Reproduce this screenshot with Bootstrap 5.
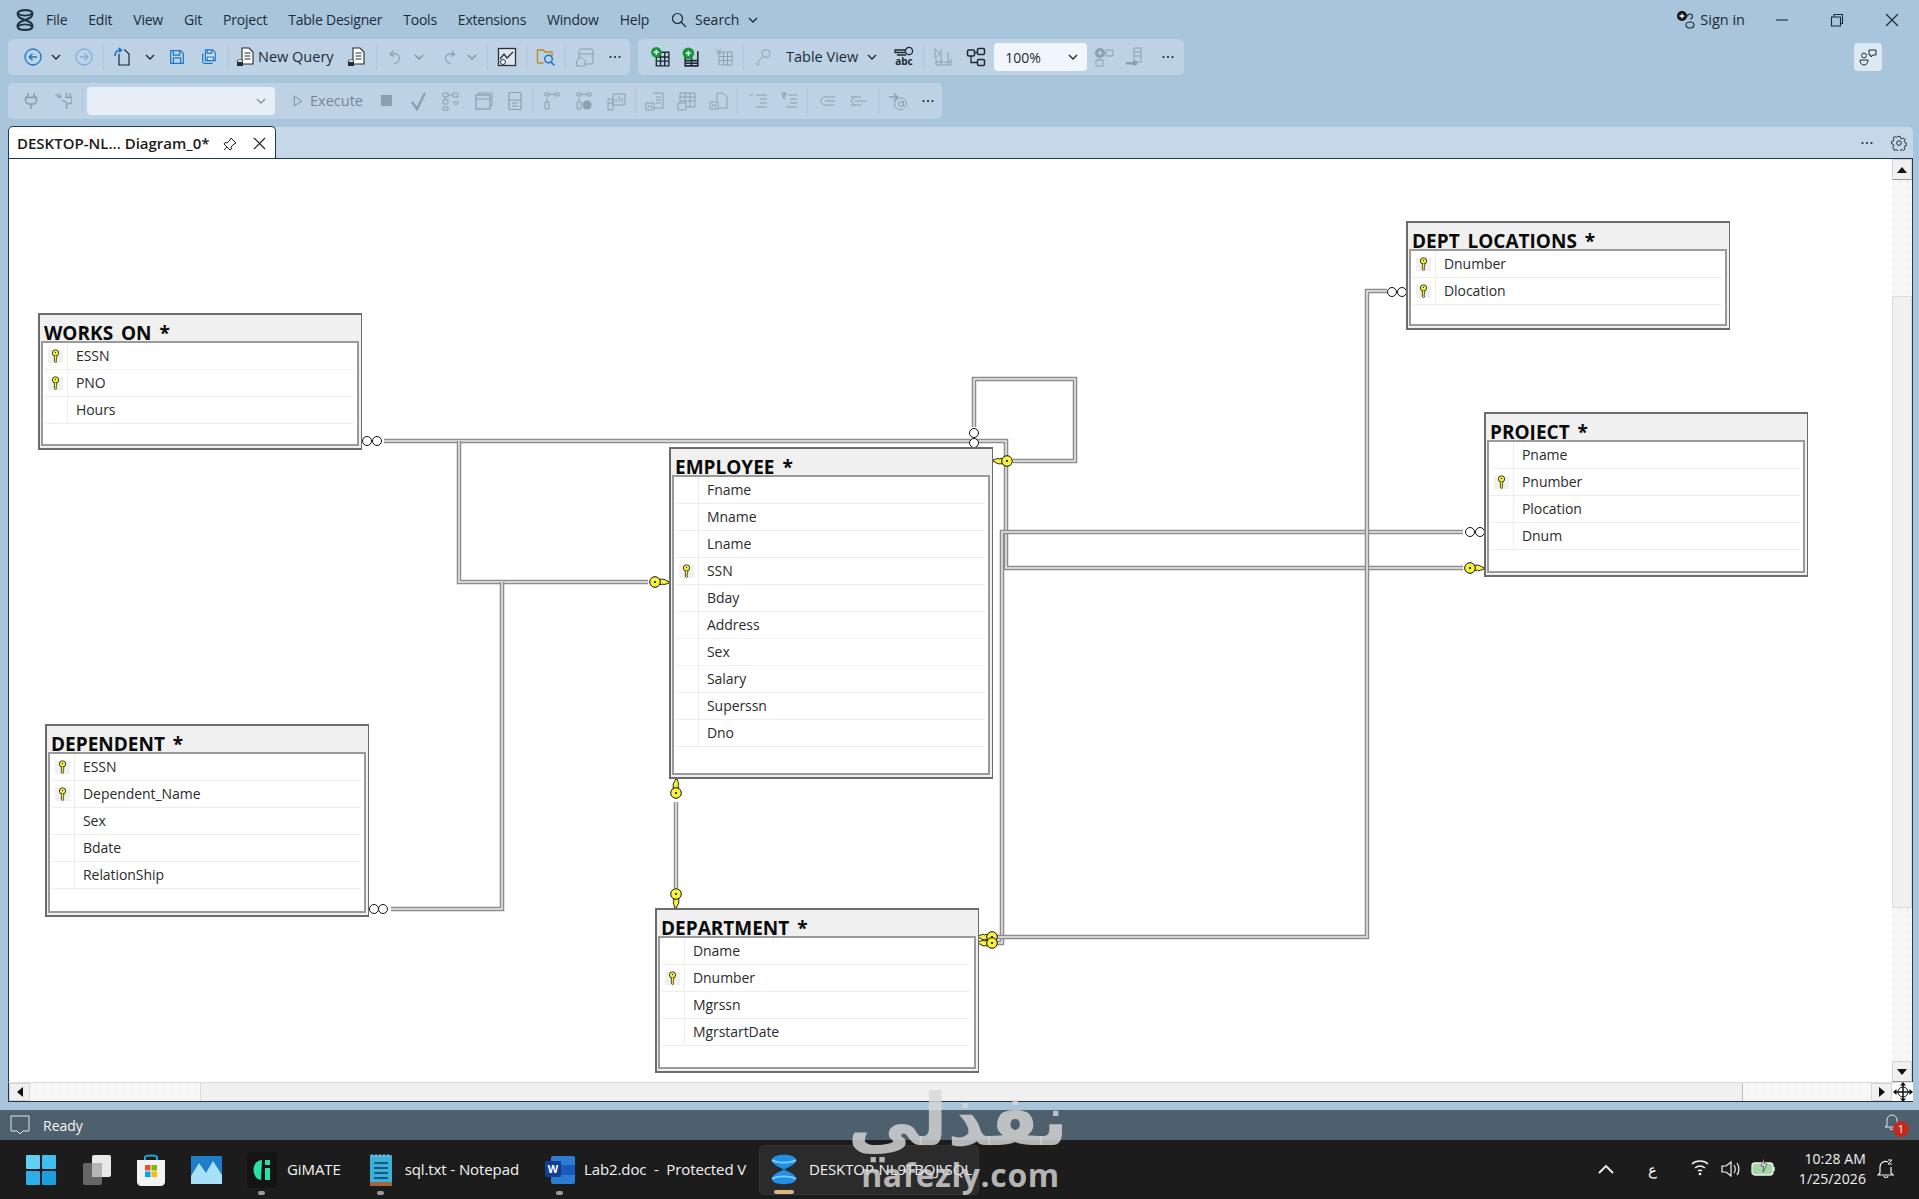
<!DOCTYPE html>
<html lang="en">
<head>
  <meta charset="UTF-8">
  <title>DESKTOP-NL9TBOJ\SQL - Diagram_0</title>
  <link href="https://cdn.jsdelivr.net/npm/bootstrap@5.3.0/dist/css/bootstrap.min.css" rel="stylesheet">
  <script src="https://cdn.jsdelivr.net/npm/bootstrap@5.3.0/dist/js/bootstrap.bundle.min.js"></script>
  <style>
    html, body { height: 1199px; overflow: hidden; }
    body { background: #a8c5db; font-family: "Open Sans", "Noto Sans", sans-serif; font-size: 14px; color: #1c2b36; width: 1919px; position: relative; }
    svg { display: block; flex: none; }
    .title-row { height: 39px; padding-left: 14px; }
    .app-logo { margin-right: 10px; }
    .menu-items { gap: 21px; font-size: 14px; letter-spacing: -.22px; }
    .search-box { margin-left: 22px; }
    .sign-text { font-size: 14.5px; margin-right: 9px; }
    .win-btn { width: 55px; }
    .tool-row { height: 36px; margin: 0 0 8px 8px; gap: 8px; }
    .tool-group { background: #bdd2e4; border-radius: 5px; height: 36px; }
    .tool-group.first { width: 622px; padding-left: 9px; }
    .tool-group.second { width: 546px; padding-left: 7px; }
    .tool-group.third { width: 934px; padding-left: 7px; }
    .tb { width: 32px; height: 36px; display: flex; align-items: center; justify-content: center; flex: none; }
    .tb.w28 { width: 28px; }
    .tb.w30 { width: 30px; }
    .tb.chev { width: 20px; }
    .tb.chev.w19 { width: 19px; }
    .tb.chev.w21 { width: 21px; }
    .tb.chev.w22 { width: 22px; }
    .tb.snug { justify-content: flex-start; padding-left: 1px; }
    .tb.off { opacity: .38; }
    .tb-sep { width: 1px; height: 26px; background: #aec5d8; margin: 0 3px; flex: none; }
    .tb-sep.tight { margin: 0 2px; }
    .tb-text { white-space: nowrap; font-size: 14.5px; }
    .tb-text.off { opacity: .45; }
    .gap-l1 { margin-left: 1px; }
    .gap-l2 { margin-left: 2px; }
    .gap-l3 { margin-left: 3px; }
    .gap-l4 { margin-left: 4px; }
    .gap-l6 { margin-left: 6px; }
    .gap-l7 { margin-left: 7px; }
    .gap-l8 { margin-left: 8px; }
    .gap-l18 { margin-left: 18px; }
    .combo-box { background: #e6eff7; border-radius: 4px; height: 28px; }
    .combo-conn { width: 188px; margin-left: 1px; justify-content: flex-end; padding-right: 8px; }
    .combo-zoom { width: 93px; margin: 0 2px; padding: 0 8px 0 11px; justify-content: space-between; background: #f0f6fb; }
    .chat-btn { position: absolute; left: 1854px; top: 43px; width: 28px; height: 28px; background: #dce9f3; border-radius: 4px; }
    .tab-strip { height: 32px; margin: 0 6px 0 8px; background: #c4d8ea; border-bottom: 1px solid #1c3a50; border-top-right-radius: 5px; padding-right: 6px; }
    .doc-tab { width: 268px; height: 32px; background: #fff; border: 1px solid #1c3a50; border-bottom: 0; border-radius: 5px 5px 0 0; padding: 2px 9px 0 8px; font-weight: 600; font-size: 15px; color: #1b1b1b; }
    .strip-tools { height: 31px; }
    .strip-btn { width: 49px; }
    .canvas-row { height: 923px; margin: 0 6px 0 8px; }
    .diagram-area { width: 1884px; height: 923px; background: #fff; position: relative; overflow: hidden; border-left: 1px solid #1c3a50; }
    .links { position: absolute; left: -1px; top: 0; }
    .er-table { position: absolute; width: 324px; background: #f0f0f0; border: 2px solid #6c6c6c; border-right-width: 1px; border-bottom-width: 2px; }
    .er-title { height: 26px; padding-left: 4px; font-weight: 700; font-size: 19px; line-height: 37px; color: #0a0a0a; white-space: nowrap; word-spacing: 3px; }
    .er-body { position: relative; background: #fff; border: 2px solid #9a9a9a; margin: 0 2px 0 1px; height: calc(100% - 28px); padding-left: 1px; padding-right: 3px; }
    .er-row { height: 27px; display: flex; border-bottom: 1px solid #eeeeee; color: #2b2b2b; font-size: 14px; line-height: 25px; letter-spacing: -.06px; }
    .er-sel { width: 24px; margin-right: 8px; border-right: 1px solid #eeeeee; display: flex; align-items: center; justify-content: center; flex: none; padding-right: 2px; }
    .key-cell { background: #f0f0f0; width: 15px; height: 13px; display: flex; align-items: center; justify-content: center; margin-left: 1px; }
    .sbar-btn { background: #f0f0f0; display: flex; align-items: center; justify-content: center; border: 1px solid #d6d6d6; flex: none; }
    .dither { background-color: #fff; background-image: linear-gradient(45deg, #efefef 25%, transparent 25%, transparent 75%, #efefef 75%), linear-gradient(45deg, #efefef 25%, transparent 25%, transparent 75%, #efefef 75%); background-size: 2px 2px; background-position: 0 0, 1px 1px; }
    .v-bar { width: 21px; height: 923px; border-right: 1px solid #1c3a50; }
    .v-bar .sbar-btn { height: 21px; border-bottom-color: #9a9a9a; }
    .v-track-top { height: 116px; }
    .v-thumb { height: 612px; background: #f0f0f0; border: 1px solid #dcdcdc; }
    .h-bar { height: 20px; margin: 0 6px 0 8px; border-left: 1px solid #1c3a50; border-bottom: 1px solid #24343f; border-top: 1px solid #dcdcdc; }
    .h-bar .sbar-btn { width: 21px; }
    .h-track-left { width: 170px; }
    .h-thumb { width: 1543px; background: #f0f0f0; border-left: 1px solid #dcdcdc; border-right: 1px solid #bdbdbd; }
    .corner-box { width: 21px; background: #fff; }
    .status-bar { height: 30px; margin-top: 8px; background: #4e606d; color: #f2f5f7; padding: 0 12px 0 10px; position: relative; }
    .status-icon { margin-right: 13px; }
    .bell-wrap { position: relative; width: 24px; height: 26px; }
    .bell-badge { position: absolute; left: 10px; top: 9px; width: 16px; height: 16px; border-radius: 50%; background: #c42b1c; color: #fff; font-size: 11px; line-height: 16px; text-align: center; }
    .task-bar { height: 59px; background: #1c1c1c; color: #f3f3f3; position: relative; padding-left: 26px; font-size: 15px; letter-spacing: -.1px; }
    .task-app { position: relative; display: flex; align-items: center; height: 50px; flex: none; }
    .task-dot { position: absolute; bottom: 0; width: 7px; height: 4px; border-radius: 2px; background: #9b9b9b; }
    .pin-tv { margin-left: 26px; }
    .pin-store { margin-left: 25px; }
    .pin-photos { margin-left: 26px; }
    .app-gimate { margin-left: 25px; gap: 10px; }
    .app-gimate .task-dot { left: 11px; }
    .app-notepad { margin-left: 28px; gap: 12px; }
    .app-notepad .task-dot { left: 8px; }
    .app-word { margin-left: 26px; gap: 9px; }
    .app-word .task-dot { left: 11px; }
    .app-word .task-label { width: 160px; white-space: pre; }
    .task-cur { background: #2b2b2b; border: 1px solid #333; border-radius: 5px; width: 220px; padding-left: 11px; gap: 12px; margin-left: 15px; }
    .task-cur .task-dot { left: 14px; width: 20px; background: #d9b77e; }
    .task-label { white-space: nowrap; }
    .tray { position: absolute; top: 0; bottom: 0; }
    .tray-up { left: 1598px; }
    .tray-lang { left: 1648px; }
    .tray-wifi { left: 1690px; }
    .tray-vol { left: 1721px; }
    .tray-batt { left: 1751px; }
    .tray-bell { left: 1877px; }
    .clock { position: absolute; right: 53px; top: 9px; text-align: right; line-height: 20px; font-size: 14px; letter-spacing: .1px; }
    .watermark { position: absolute; left: 856px; top: 1082px; width: 212px; text-align: center; color: rgba(215,215,215,.82); pointer-events: none; }
    .watermark-ar { font-family: "DejaVu Sans", sans-serif; font-weight: 700; font-size: 72px; line-height: 76px; white-space: nowrap; }
    .watermark-en { font-weight: 700; font-size: 32px; line-height: 38px; margin: -2px 0 0 -3px; letter-spacing: .6px; }
  </style>
</head>
<body>

<svg width="0" height="0" class="position-absolute">
  <defs>
    <symbol id="chev" viewBox="0 0 12 12"><path d="M2 4l4 4 4-4" fill="none" stroke="currentColor" stroke-width="1.3"/></symbol>
    <symbol id="dots" viewBox="0 0 20 20"><circle cx="5" cy="10" r="1.2" fill="#1c2b36"/><circle cx="10" cy="10" r="1.2" fill="#1c2b36"/><circle cx="15" cy="10" r="1.2" fill="#1c2b36"/></symbol>
    <symbol id="back" viewBox="0 0 20 20"><circle cx="10" cy="10" r="8" fill="none" stroke="#1e78c8" stroke-width="1.3"/><path d="M14 10H6.500M9.500 6.800L6.200 10l3.300 3.200" fill="none" stroke="#1e78c8" stroke-width="1.3"/></symbol>
    <symbol id="fwd" viewBox="0 0 20 20"><circle cx="10" cy="10" r="8" fill="none" stroke="#1e78c8" stroke-width="1.3"/><path d="M6 10h7.500M10.500 6.800l3.300 3.200-3.300 3.200" fill="none" stroke="#1e78c8" stroke-width="1.3"/></symbol>
    <symbol id="newproj" viewBox="0 0 20 20"><path d="M6 7v11h10V7l-4-4h-1" fill="none" stroke="#1f2a33" stroke-width="1.2"/><path d="M2 9c0-4 2-6 6-6M5.500 1L8.500 3 6 5.500" fill="none" stroke="#1e78c8" stroke-width="1.6"/></symbol>
    <symbol id="save" viewBox="0 0 20 20"><path d="M3 3h11l3 3v11H3zM6 3v5h7V3M6 17v-6h8v6" fill="none" stroke="#1e78c8" stroke-width="1.4"/></symbol>
    <symbol id="saveall" viewBox="0 0 20 20"><path d="M3 6v9c0 1 1 2 2 2h9" fill="none" stroke="#1e78c8" stroke-width="1.3"/><path d="M6 2h8l3 3v9H6zM8 2v4h5V2M8 14v-4h7v4" fill="#cfe0ee" stroke="#1e78c8" stroke-width="1.3"/></symbol>
    <symbol id="query" viewBox="0 0 20 20"><path d="M6 1h7l4 4v12H6z" fill="#fff" stroke="#1f2a33" stroke-width="1.1"/><path d="M8.500 6h6M8.500 9h6M8.500 12h6" stroke="#1f2a33" stroke-width="1"/><path d="M1 14h6v5H1z" fill="#1f2a33"/><ellipse cx="4" cy="14" rx="3" ry="1.300" fill="#fff" stroke="#1f2a33" stroke-width=".7"/></symbol>
    <symbol id="undo" viewBox="0 0 20 20"><path d="M7 3L3.500 7 8 9.500M4 7c6-2 11 1 9.500 6-.7 2.500-3 4-5.500 4" fill="none" stroke="#3c5060" stroke-width="1.3"/></symbol>
    <symbol id="redo" viewBox="0 0 20 20"><path d="M13 3l3.500 4L12 9.500M16 7c-6-2-11 1-9.500 6 .7 2.500 3 4 5.500 4" fill="none" stroke="#3c5060" stroke-width="1.3"/></symbol>
    <symbol id="monitor" viewBox="0 0 20 20"><rect x="1.500" y="1.500" width="17" height="17" fill="#dfe8ef" stroke="#27333c" stroke-width="1.300"/><path d="M3 12l4-5 3 4 6-6" fill="none" stroke="#27333c" stroke-width="1.300"/><circle cx="6" cy="15" r="2.500" fill="#fff" stroke="#27333c"/></symbol>
    <symbol id="foldersearch" viewBox="0 0 20 20"><path d="M1.500 16V3h6l1.500 2h7v4M1.500 16h6" fill="none" stroke="#c28a1c" stroke-width="1.400"/><circle cx="12.500" cy="12" r="3.800" fill="none" stroke="#1e78c8" stroke-width="1.500"/><path d="M15 15l3.500 3.500" stroke="#1e78c8" stroke-width="1.600"/></symbol>
    <symbol id="home" viewBox="0 0 20 20"><rect x="4" y="2" width="14" height="15" rx="2" fill="none" stroke="#3c5060"/><path d="M4 7h14" stroke="#3c5060"/><path d="M1.500 19v-5L6 10l4 4v5z" fill="#bdd2e4" stroke="#3c5060"/></symbol>
    <symbol id="addtable" viewBox="0 0 20 20"><path d="M6 5h12v13H6zM6 9.500h12M6 13.500h12M10 5v13M14 5v13" fill="none" stroke="#1f2a33" stroke-width="1.300"/><circle cx="6" cy="5" r="5" fill="#109a3a"/><path d="M3.500 5h5M6 2.500v5" stroke="#fff" stroke-width="1.400"/></symbol>
    <symbol id="addtable2" viewBox="0 0 20 20"><path d="M4 9v9h12V4M4 13h12M4 15.500h12M10 9v9" fill="none" stroke="#1f2a33" stroke-width="1.500"/><circle cx="7" cy="6" r="5.500" fill="#109a3a"/><path d="M4.500 6h5M7 3.500v5" stroke="#fff" stroke-width="1.400"/></symbol>
    <symbol id="deltable" viewBox="0 0 20 20"><path d="M5 5h13v13H5zM5 9.500h13M5 13.500h13M9.500 5v13M13.500 5v13M2 2l5 5M7 2L2 7" fill="none" stroke="#3c5060"/></symbol>
    <symbol id="keyout" viewBox="0 0 20 20"><circle cx="13" cy="6.500" r="4" fill="none" stroke="#3c5060"/><path d="M10 9.500L3 17l1.500 1.500 2-2" fill="none" stroke="#3c5060"/></symbol>
    <symbol id="tabcols" viewBox="0 0 20 20"><path d="M2 2v9l5-4.500zM8 2v15M15 5v12M3 12v6h15v-6M3 15h15" fill="none" stroke="#3c5060"/></symbol>
    <symbol id="related" viewBox="0 0 20 20"><rect x="1.500" y="3" width="7" height="6" rx="1.200" fill="none" stroke="#1f2a33" stroke-width="1.500"/><rect x="11.500" y="1.500" width="7" height="6" rx="1.200" fill="none" stroke="#1f2a33" stroke-width="1.500"/><rect x="11.500" y="12.500" width="7" height="6" rx="1.200" fill="none" stroke="#1f2a33" stroke-width="1.500"/><path d="M8.500 5.500h3M5 9v6.500h6.500" fill="none" stroke="#1f2a33" stroke-width="1.300"/></symbol>
    <symbol id="addrel" viewBox="0 0 20 20"><circle cx="6" cy="6" r="5" fill="#3c5060"/><path d="M3.500 6h5M6 3.500v5" stroke="#fff"/><path d="M12 3h7v6h-7zM2 13h7v6H2zM5 11v2M11 6h1" fill="none" stroke="#3c5060"/></symbol>
    <symbol id="colkey" viewBox="0 0 20 20"><path d="M9 1h7v14H9zM9 5h7M9 9h7" fill="none" stroke="#3c5060"/><circle cx="10" cy="16" r="2.500" fill="#3c5060"/><path d="M1 15h8v2.500H1z" fill="#3c5060"/></symbol>
    <symbol id="plug" viewBox="0 0 20 20"><path d="M6.500 1v5M13.500 1v5M4 6h12v4c0 2-2 3.500-6 3.500S4 12 4 10zM10 13.500V19" fill="none" stroke="#3c5060" stroke-width="1.800"/></symbol>
    <symbol id="unplug" viewBox="0 0 20 20"><path d="M2 3l5 4M5 1.500l3 5M9.500 9l6 4M14 1v5M18 1v5M12 6h8v4c0 2-1.500 3-4 3M14 13v6" fill="none" stroke="#3c5060" stroke-width="1.500"/></symbol>
    <symbol id="play" viewBox="0 0 12 16"><path d="M1.500 2l9 6-9 6z" fill="none" stroke="#3c5060" stroke-width="1.200"/></symbol>
    <symbol id="stop" viewBox="0 0 20 20"><rect x="4" y="4" width="11" height="11" fill="#3c5060"/></symbol>
    <symbol id="check" viewBox="0 0 20 20"><path d="M3 11l5 7 8-16" fill="none" stroke="#3c5060" stroke-width="2.400"/></symbol>
    <symbol id="plan" viewBox="0 0 20 20"><path d="M2 2h5v4H2zM12 2h5v4h-5zM2 9h5v4H2zM2 16h5v3H2zM7 4h5M4.500 6v3M12 11l3 3 3-3z" fill="none" stroke="#3c5060"/></symbol>
    <symbol id="grid1" viewBox="0 0 20 20"><rect x="3" y="4" width="14" height="14" fill="none" stroke="#3c5060" stroke-width="1.300"/><path d="M5 4V2h14v13h-2M3 8h14" fill="none" stroke="#3c5060"/></symbol>
    <symbol id="grid2" viewBox="0 0 20 20"><rect x="4" y="1.500" width="12" height="17" rx="1" fill="none" stroke="#3c5060" stroke-width="1.200"/><path d="M4 9h12M7 12h6M7 15h6" stroke="#3c5060"/></symbol>
    <symbol id="plan2" viewBox="0 0 20 20"><path d="M3 2h4v3H3zM13 2h4v3h-4zM7 3.500h6M5 7v4M3 11h4v7H3z" fill="none" stroke="#3c5060"/></symbol>
    <symbol id="plan3" viewBox="0 0 20 20"><path d="M3 2h4v3H3zM13 2h4v3h-4zM7 3.500h6M5 7v4M3 11h4v7H3z" fill="none" stroke="#3c5060"/><circle cx="13" cy="14" r="4.500" fill="#3c5060"/></symbol>
    <symbol id="stats" viewBox="0 0 20 20"><path d="M7 3h12v11H7zM10 11V8M13 11V5M16 11V7M2 8h5v11H2zM2 12h5" fill="none" stroke="#3c5060"/></symbol>
    <symbol id="docs" viewBox="0 0 20 20"><path d="M8 2h10v15H9M11 6h5M11 9h5M11 12h5M1 12h8v7H1zM4 14v3M6.500 14v3" fill="none" stroke="#3c5060"/></symbol>
    <symbol id="tbl" viewBox="0 0 20 20"><path d="M3 2h15v14H3zM3 6h15M3 10h15M8 2v14M13 2v14" fill="none" stroke="#3c5060"/><path d="M1 12h8v7H1z" fill="#bdd2e4" stroke="#3c5060"/></symbol>
    <symbol id="docfold" viewBox="0 0 20 20"><path d="M9 17h9V6l-4-4H8v8M1 11h8v7H1zM4 13v3M6.500 13v3" fill="none" stroke="#3c5060"/></symbol>
    <symbol id="indent" viewBox="0 0 20 20"><path d="M7 4h11M11 8h7M11 12h7M7 16h11M1 4h3" fill="none" stroke="#3c5060" stroke-width="1.100"/></symbol>
    <symbol id="outdent" viewBox="0 0 20 20"><path d="M9 4h9M11 8h7M11 12h7M7 16h11M2 2l5 0-2 4M7 2C3 3 3 6 6 8" fill="none" stroke="#3c5060" stroke-width="1.100"/></symbol>
    <symbol id="comment" viewBox="0 0 20 20"><path d="M8 6h10M8 10h10M8 14h10M8 5L3 10l5 5" fill="none" stroke="#3c5060"/></symbol>
    <symbol id="uncomment" viewBox="0 0 20 20"><path d="M2 6h10M6 10h12M2 14h10M6 5L2 10l4 5" fill="none" stroke="#3c5060"/></symbol>
    <symbol id="atsign" viewBox="0 0 20 20"><path d="M1 6h8M6 2.500L9.500 6 6 9.500" fill="none" stroke="#3c5060" stroke-width="1.300"/><circle cx="13" cy="13" r="2.500" fill="none" stroke="#3c5060"/><path d="M15.500 10v4.500c0 2 3 1.500 3-1.500a6 6 0 1 0-3 5" fill="none" stroke="#3c5060"/></symbol>
    <symbol id="rowkey" viewBox="0 0 10 16"><circle cx="5" cy="4.500" r="3.600" fill="#f7f23a" stroke="#222" stroke-width="1"/><circle cx="5" cy="4" r=".8" fill="#222"/><path d="M3.700 8v6.500l1.400 1 1.300-1-.8-1 .8-1-.8-1 .8-1V8" fill="#f7f23a" stroke="#222" stroke-width=".9"/></symbol>
    <!-- relation end cap, drawn pointing right from the line into the table -->
    <symbol id="linkkey" viewBox="0 0 21 12"><path d="M9 3.200h6l2 1.200 3 1.400v1.200l-2.500 1h-1.500l-1 1-1.500-1-1.500 1-1-1H9z" fill="#f7f23a" stroke="#111" stroke-width=".9"/><circle cx="6" cy="6" r="5.300" fill="#f7f23a" stroke="#111" stroke-width="1"/><circle cx="6" cy="6" r="1.100" fill="#111"/></symbol>
  </defs>
</svg>

<!-- menu row -->
<div class="d-flex align-items-center title-row">
  <svg class="app-logo" width="22" height="24" viewBox="2 -1 18 26"><path d="M3 5c0-5 16-5 16 0 0 4-3 5-8 7-5 2-8 3-8 7 0 5 16 5 16 0 0-4-3-5-8-7-5-2-8-3-8-7z" fill="none" stroke="#1f3444" stroke-width="2.400"/><path d="M3 5c4 3 12 3 16 0M3 19c4-3 12-3 16 0" fill="none" stroke="#1f3444" stroke-width="1.800"/></svg>
  <div class="d-flex align-items-center menu-items">
    <span>File</span><span>Edit</span><span>View</span><span>Git</span><span>Project</span><span>Table Designer</span><span>Tools</span><span>Extensions</span><span>Window</span><span>Help</span>
  </div>
  <div class="d-flex align-items-center search-box gap-2">
    <svg width="16" height="16" viewBox="0 0 16 16"><circle cx="6.500" cy="6.500" r="5" fill="none" stroke="#1c2b36" stroke-width="1.200"/><path d="M10 10l5 5" stroke="#1c2b36" stroke-width="1.300"/></svg>
    <span>Search</span>
    <svg width="12" height="12" color="#1c2b36"><use href="#chev"/></svg>
  </div>
  <div class="d-flex align-items-center ms-auto">
    <svg width="20" height="20" viewBox="0 0 20 20" class="me-1"><path d="M10 15c0-2 2-3 4-3s4 1 4 3-2 3-4 3-4-1-4-3zM11.500 6.500A2.500 2.500 0 1 1 14 9" fill="none" stroke="#1c2b36" stroke-width="1.100"/><circle cx="6" cy="6" r="5" fill="#111"/><path d="M3.500 6h5M6 3.500v5" stroke="#fff" stroke-width="1.300"/></svg>
    <span class="sign-text">Sign in</span>
    <div class="win-btn d-flex justify-content-center"><svg width="14" height="14"><path d="M1 7h12" stroke="#1c2b36" stroke-width="1.100"/></svg></div>
    <div class="win-btn d-flex justify-content-center"><svg width="14" height="14"><path d="M1.500 4h9v9h-9zM4 4V1.500h8.500v9H10.500" fill="none" stroke="#1c2b36" stroke-width="1.100"/></svg></div>
    <div class="win-btn d-flex justify-content-center"><svg width="14" height="14"><path d="M1 1l12 12M13 1L1 13" stroke="#1c2b36" stroke-width="1.100"/></svg></div>
  </div>
</div>

<!-- toolbars -->
<div class="d-flex tool-row">
  <div class="d-flex align-items-center tool-group first">
    <span class="tb"><svg width="20" height="20"><use href="#back"/></svg></span>
    <span class="tb chev w19 snug"><svg width="12" height="12"><use href="#chev"/></svg></span>
    <span class="tb off"><svg width="20" height="20"><use href="#fwd"/></svg></span>
    <span class="tb-sep"></span>
    <span class="tb"><svg width="20" height="20"><use href="#newproj"/></svg></span>
    <span class="tb chev w22"><svg width="12" height="12"><use href="#chev"/></svg></span>
    <span class="tb"><svg width="18" height="18"><use href="#save"/></svg></span>
    <span class="tb"><svg width="18" height="18"><use href="#saveall"/></svg></span>
    <span class="tb-sep"></span>
    <span class="d-flex align-items-center gap-l4"><svg width="20" height="20"><use href="#query"/></svg><span class="tb-text gap-l2">New Query</span></span>
    <span class="tb gap-l7"><svg width="20" height="20"><use href="#query"/></svg></span>
    <span class="tb-sep"></span>
    <span class="tb off"><svg width="18" height="18"><use href="#undo"/></svg></span>
    <span class="tb chev w21 snug off"><svg width="12" height="12"><use href="#chev"/></svg></span>
    <span class="tb off"><svg width="18" height="18"><use href="#redo"/></svg></span>
    <span class="tb chev w19 snug off"><svg width="12" height="12"><use href="#chev"/></svg></span>
    <span class="tb-sep"></span>
    <span class="tb"><svg width="20" height="20"><use href="#monitor"/></svg></span>
    <span class="tb-sep"></span>
    <span class="tb"><svg width="20" height="20"><use href="#foldersearch"/></svg></span>
    <span class="tb-sep"></span>
    <span class="tb off"><svg width="20" height="20"><use href="#home"/></svg></span>
    <span class="tb w28"><svg width="18" height="18"><use href="#dots"/></svg></span>
  </div>
  <div class="d-flex align-items-center tool-group second">
    <span class="tb w30"><svg width="21" height="21"><use href="#addtable"/></svg></span>
    <span class="tb"><svg width="21" height="21"><use href="#addtable2"/></svg></span>
    <span class="tb off gap-l1"><svg width="20" height="20"><use href="#deltable"/></svg></span>
    <span class="tb-sep"></span>
    <span class="tb off"><svg width="20" height="20"><use href="#keyout"/></svg></span>
    <span class="tb-text gap-l7">Table View</span>
    <span class="tb chev gap-l4"><svg width="12" height="12"><use href="#chev"/></svg></span>
    <span class="tb gap-l6">
      <svg width="22" height="24" viewBox="0 0 22 24"><circle cx="16" cy="6" r="3.600" fill="none" stroke="#1f2a33" stroke-width="1.300"/><path d="M12.500 5H2v2.500h10.500M4 10h9" fill="none" stroke="#1f2a33" stroke-width="1.300"/><text x="11" y="20" text-anchor="middle" font-size="10" font-weight="700" fill="#1f2a33" font-family="Open Sans">abc</text></svg>
    </span>
    <span class="tb-sep"></span>
    <span class="tb off"><svg width="20" height="20"><use href="#tabcols"/></svg></span>
    <span class="tb gap-l1"><svg width="20" height="20"><use href="#related"/></svg></span>
    <div class="d-flex align-items-center combo-box combo-zoom"><span>100%</span><svg width="12" height="12"><use href="#chev"/></svg></div>
    <span class="tb w30 off"><svg width="20" height="20"><use href="#addrel"/></svg></span>
    <span class="tb off"><svg width="20" height="20"><use href="#colkey"/></svg></span>
    <span class="tb w28 gap-l3"><svg width="18" height="18"><use href="#dots"/></svg></span>
  </div>
</div>
<div class="d-flex tool-row">
  <div class="d-flex align-items-center tool-group third">
    <span class="tb off"><svg width="18" height="18"><use href="#plug"/></svg></span>
    <span class="tb off"><svg width="18" height="18"><use href="#unplug"/></svg></span>
    <span class="tb-sep"></span>
    <div class="d-flex align-items-center combo-box combo-conn"><svg width="12" height="12" color="#7f8f9c"><use href="#chev"/></svg></div>
    <span class="d-flex align-items-center gap-l18"><svg width="10" height="14" class="opacity-50"><use href="#play"/></svg><span class="tb-text off gap-l7">Execute</span></span>
    <span class="tb off gap-l8"><svg width="20" height="20"><use href="#stop"/></svg></span>
    <span class="tb off"><svg width="20" height="20"><use href="#check"/></svg></span>
    <span class="tb off"><svg width="20" height="20"><use href="#plan"/></svg></span>
    <span class="tb off"><svg width="20" height="20"><use href="#grid1"/></svg></span>
    <span class="tb off"><svg width="20" height="20"><use href="#grid2"/></svg></span>
    <span class="tb-sep tight"></span>
    <span class="tb off"><svg width="20" height="20"><use href="#plan2"/></svg></span>
    <span class="tb off"><svg width="20" height="20"><use href="#plan3"/></svg></span>
    <span class="tb off"><svg width="20" height="20"><use href="#stats"/></svg></span>
    <span class="tb-sep"></span>
    <span class="tb off"><svg width="20" height="20"><use href="#docs"/></svg></span>
    <span class="tb off"><svg width="20" height="20"><use href="#tbl"/></svg></span>
    <span class="tb off"><svg width="20" height="20"><use href="#docfold"/></svg></span>
    <span class="tb-sep tight"></span>
    <span class="tb w30 off gap-l4"><svg width="20" height="20"><use href="#indent"/></svg></span>
    <span class="tb w30 off"><svg width="20" height="20"><use href="#outdent"/></svg></span>
    <span class="tb-sep"></span>
    <span class="tb off"><svg width="20" height="20"><use href="#comment"/></svg></span>
    <span class="tb off"><svg width="20" height="20"><use href="#uncomment"/></svg></span>
    <span class="tb-sep"></span>
    <span class="tb off"><svg width="20" height="20"><use href="#atsign"/></svg></span>
    <span class="tb w28"><svg width="18" height="18"><use href="#dots"/></svg></span>
  </div>
</div>
<div class="chat-btn d-flex align-items-center justify-content-center">
  <svg width="20" height="20" viewBox="0 0 20 20"><circle cx="6" cy="8.500" r="2.400" fill="none" stroke="#1c2b36"/><path d="M2 13h8c0 3-1.500 5-4 5s-4-2-4-5z" fill="none" stroke="#1c2b36"/><path d="M11 3h7v5h-3l-2 2V8h-2z" fill="none" stroke="#1c2b36"/></svg>
</div>

<!-- document tab -->
<div class="d-flex align-items-end tab-strip">
  <div class="d-flex align-items-center doc-tab">
    <span class="flex-grow-1 text-nowrap">DESKTOP-NL... Diagram_0*</span>
    <svg width="14" height="14" viewBox="0 0 14 14" class="me-3"><path d="M8 1l5 5-2 1-3 3 .5 2L7 13 1 7l1-1.500 2 .5 3-3z" fill="none" stroke="#222"/><path d="M4 10l-3 3" stroke="#222"/></svg>
    <svg width="13" height="13"><path d="M1 1l11 11M12 1L1 12" stroke="#222" stroke-width="1.200"/></svg>
  </div>
  <div class="ms-auto d-flex align-items-center strip-tools">
    <span class="strip-btn d-flex justify-content-center"><svg width="18" height="18"><use href="#dots"/></svg></span>
    <svg width="16" height="16" viewBox="0 0 16 16"><circle cx="8" cy="8" r="2.300" fill="none" stroke="#1c2b36"/><path d="M6.800 1h2.400l.4 2 1.500.7 1.800-1 1.600 1.800-1 1.700.6 1.500 2 .5v2.400l-2 .5-.6 1.500 1 1.700-1.700 1.600-1.700-1-1.500.6-.4 2H6.800l-.5-2-1.500-.6-1.700 1L1.500 12.400l1-1.700L1.900 9.200 0 8.700V6.500l2-.5.6-1.500-1-1.700L3.300 1.100l1.700 1 1.400-.6z" fill="none" stroke="#1c2b36" transform="translate(.4 .4) scale(.95)"/></svg>
  </div>
</div>

<!-- diagram canvas and scroll bars -->
<div class="d-flex canvas-row">
  <div class="diagram-area" id="diagram">
    <svg class="links" id="links" width="1884" height="923" viewBox="8 159 1884 923"></svg>
  </div>
  <div class="d-flex flex-column v-bar">
    <div class="sbar-btn"><svg width="10" height="6"><path d="M5 0l5 6H0z" fill="#111"/></svg></div>
    <div class="dither v-track-top"></div>
    <div class="v-thumb"></div>
    <div class="dither flex-grow-1"></div>
    <div class="sbar-btn"><svg width="10" height="6"><path d="M0 0h10L5 6z" fill="#111"/></svg></div>
  </div>
</div>
<div class="d-flex h-bar">
  <div class="sbar-btn"><svg width="6" height="10"><path d="M6 0v10L0 5z" fill="#111"/></svg></div>
  <div class="dither h-track-left"></div>
  <div class="h-thumb"></div>
  <div class="dither flex-grow-1"></div>
  <div class="sbar-btn"><svg width="6" height="10"><path d="M0 0l6 5-6 5z" fill="#111"/></svg></div>
  <div class="corner-box d-flex align-items-center justify-content-center">
    <svg width="20" height="20" viewBox="0 0 20 20"><path d="M10 1v18M1 10h18" stroke="#111" stroke-width="1.500"/><path d="M10 0l3 3.500H7zM10 20l-3-3.500h6zM0 10l3.500-3v6zM20 10l-3.500 3V7z" fill="#111"/><circle cx="10" cy="10" r="5" fill="none" stroke="#111"/></svg>
  </div>
</div>

<!-- status bar -->
<div class="d-flex align-items-center status-bar">
  <svg width="20" height="22" viewBox="0 0 20 22" class="status-icon"><path d="M1 2h18v15h-6l-3 3-3-3H1z" fill="none" stroke="#dfe6ea"/></svg>
  <span>Ready</span>
  <div class="ms-auto bell-wrap">
    <svg width="18" height="20" viewBox="0 0 18 20"><path d="M4 14V8a5 5 0 0 1 10 0v6l2 1H2zM7 16c0 2 4 2 4 0" fill="none" stroke="#dfe6ea"/></svg>
    <span class="bell-badge">1</span>
  </div>
</div>

<!-- taskbar -->
<div class="d-flex align-items-center task-bar">
  <div class="task-app">
    <svg width="30" height="30" viewBox="0 0 30 30"><rect width="14" height="14" rx="1" fill="#62d0f5"/><rect x="16" width="14" height="14" rx="1" fill="#3fc0f0"/><rect y="16" width="14" height="14" rx="1" fill="#2eaee8"/><rect x="16" y="16" width="14" height="14" rx="1" fill="#1c9fe0"/></svg>
  </div>
  <div class="task-app pin-tv">
    <svg width="30" height="30" viewBox="0 0 30 30"><rect x="10" y="0" width="19" height="22" rx="2" fill="#e8e8e8"/><rect x="1" y="8" width="19" height="22" rx="2" fill="#666"/><rect x="10" y="8" width="10" height="14" fill="#b5b5b5"/></svg>
  </div>
  <div class="task-app pin-store">
    <svg width="28" height="32" viewBox="0 0 28 32"><path d="M8 6V3c0-2 12-2 12 0v3" fill="none" stroke="#22a7e0" stroke-width="2"/><path d="M0 6h28v22c0 2-2 4-4 4H4c-2 0-4-2-4-4z" fill="#f3f3f3"/><rect x="8" y="11" width="5.500" height="5.500" fill="#f25022"/><rect x="14.500" y="11" width="5.500" height="5.500" fill="#7fba00"/><rect x="8" y="17.500" width="5.500" height="5.500" fill="#00a4ef"/><rect x="14.500" y="17.500" width="5.500" height="5.500" fill="#ffb900"/></svg>
  </div>
  <div class="task-app pin-photos">
    <svg width="31" height="28" viewBox="0 0 31 28"><rect width="31" height="28" fill="#1d7fc9"/><path d="M0 20l8-13 7 10 7-12 9 14v9H0z" fill="#a8e0f8"/></svg>
  </div>
  <div class="task-app app-gimate">
    <svg width="30" height="36" viewBox="0 0 30 36"><rect width="30" height="36" rx="4" fill="#141414"/><path d="M15 8a8 10 0 0 0-1 20z" fill="#27e0a6"/><path d="M18 8h5v5h-5zM18 16h5v12h-5z" fill="#27e0a6"/></svg>
    <span class="task-label">GiMATE</span>
    <span class="task-dot"></span>
  </div>
  <div class="task-app app-notepad">
    <svg width="24" height="34" viewBox="0 0 24 34"><rect x="1" y="2" width="22" height="31" rx="1" fill="#3fb1d8"/><rect x="1" y="29" width="22" height="4" fill="#a5673a"/><path d="M3 1v3M7 1v3M11 1v3M15 1v3M19 1v3" stroke="#8fd3ea"/><path d="M5 10h14M5 15h14M5 20h14M5 25h14" stroke="#0a5b7c" stroke-width="2.200"/></svg>
    <span class="task-label">sql.txt - Notepad</span>
    <span class="task-dot"></span>
  </div>
  <div class="task-app app-word">
    <svg width="30" height="30" viewBox="0 0 30 30"><rect x="6" y="1" width="24" height="28" rx="2" fill="#2b7cd3"/><rect x="6" y="10" width="24" height="10" fill="#185abd"/><rect x="0" y="6" width="16" height="16" rx="1" fill="#103f91"/><text x="8" y="18" text-anchor="middle" font-size="11" font-weight="700" fill="#fff" font-family="Liberation Sans">W</text></svg>
    <span class="task-label">Lab2.doc  -  Protected V</span>
    <span class="task-dot"></span>
  </div>
  <div class="task-app task-cur">
    <svg width="26" height="31" viewBox="0 0 26 36" preserveAspectRatio="none"><path d="M1 7c0-8 24-8 24 0 0 5-5 7-12 11-7 4-12 6-12 11 0 8 24 8 24 0 0-5-5-7-12-11C6 14 1 12 1 7z" fill="#1f8fe8"/><path d="M1 7c5 4 19 4 24 0M1 29c5-4 19-4 24 0" fill="none" stroke="#7fd0ff" stroke-width="2"/></svg>
    <span class="task-label">DESKTOP-NL9TBOJ\SQL</span>
    <span class="task-dot"></span>
  </div>
  <svg class="tray tray-up" width="16" height="59" viewBox="0 0 16 59"><path d="M1 33l7-7 7 7" fill="none" stroke="#f3f3f3" stroke-width="1.800"/></svg>
  <span class="tray tray-lang d-flex align-items-center">ع</span>
  <svg class="tray tray-wifi" width="20" height="59" viewBox="0 0 20 59"><path d="M2 24c4-4 12-4 16 0M5 28c3-2.500 7-2.500 10 0M8 31c1-1 3-1 4 0" fill="none" stroke="#f3f3f3" stroke-width="1.500"/><circle cx="10" cy="34" r="1.300" fill="#f3f3f3"/></svg>
  <svg class="tray tray-vol" width="20" height="59" viewBox="0 0 20 59"><path d="M1 26h4l5-4v14l-5-4H1zM13 25c1.500 2.500 1.500 6 0 8M16 23c2.500 3.500 2.500 9 0 12" fill="none" stroke="#f3f3f3" stroke-width="1.200"/></svg>
  <svg class="tray tray-batt" width="25" height="59" viewBox="0 0 25 59"><rect x="1" y="23" width="21" height="12" rx="3" fill="#a5d6a7" stroke="#f3f3f3" stroke-width="1.300"/><path d="M23 27v4" stroke="#f3f3f3" stroke-width="1.500"/><path d="M13 18l-3 8h3l-1 6 4-8h-3z" fill="#f3f3f3" stroke="#1c1c1c" stroke-width=".6"/></svg>
  <div class="clock"><div>10:28 AM</div><div>1/25/2026</div></div>
  <svg class="tray tray-bell" width="18" height="59" viewBox="0 0 18 59"><path d="M3 33v-6a5.500 5.500 0 0 1 8-5M14 27v6l2 2H1l2-2M7 36c0 2 4 2 4 0" fill="none" stroke="#f3f3f3" stroke-width="1.200"/><path d="M11 20h4l-4 4h4" fill="none" stroke="#f3f3f3"/></svg>
</div>

<div class="watermark">
  <div class="watermark-ar" dir="rtl" lang="ar">نفذلي</div>
  <div class="watermark-en">nafezly.com</div>
</div>

<script>
  // x, y, h are page coordinates of the outer box
  const tables = [
    { name: "WORKS_ON *", x: 38, y: 313, h: 137, rows: [["ESSN", 1], ["PNO", 1], ["Hours", 0]] },
    { name: "DEPENDENT *", x: 45, y: 724, h: 193, rows: [["ESSN", 1], ["Dependent_Name", 1], ["Sex", 0], ["Bdate", 0], ["RelationShip", 0]] },
    { name: "EMPLOYEE *", x: 669, y: 447, h: 332, rows: [["Fname", 0], ["Mname", 0], ["Lname", 0], ["SSN", 1], ["Bday", 0], ["Address", 0], ["Sex", 0], ["Salary", 0], ["Superssn", 0], ["Dno", 0]] },
    { name: "DEPARTMENT *", x: 655, y: 908, h: 165, rows: [["Dname", 0], ["Dnumber", 1], ["Mgrssn", 0], ["MgrstartDate", 0]] },
    { name: "DEPT_LOCATIONS *", x: 1406, y: 221, h: 109, rows: [["Dnumber", 1], ["Dlocation", 1]] },
    { name: "PROJECT *", x: 1484, y: 412, h: 165, rows: [["Pname", 0], ["Pnumber", 1], ["Plocation", 0], ["Dnum", 0]] }
  ];

  // relationship lines
  const paths = [
    "M384 441H1006V568H1463",
    "M459 441V582H648",
    "M391 909H502V582",
    "M974 427V379H1075V461H1013",
    "M1463 532H1002V943H990",
    "M990 937H1367V291H1387",
    "M676 802V888"
  ];

  // [x, y] of the optional-end circles
  const rings = [[367, 441], [377, 441], [374, 909], [383, 909], [974, 433], [974, 443], [1392, 292], [1402, 292], [1470, 532], [1480, 532]];

  // [x, y, rotation] of the key ends, circle centre given
  const keys = [[655, 582, 0], [1007, 461, 180], [1470, 568, 0], [676, 793, -90], [676, 894, 90], [992, 937, 180], [992, 943, 180]];

  const diagram = document.getElementById("diagram");
  const links = document.getElementById("links");
  let svg = "";
  paths.forEach(d => {
    svg += `<path d="${d}" fill="none" stroke="#8c8c8c" stroke-width="4.500"/>`;
    svg += `<path d="${d}" fill="none" stroke="#ececec" stroke-width="1.500"/>`;
  });
  rings.forEach(r => {
    svg += `<circle cx="${r[0]}" cy="${r[1]}" r="4.500" fill="#fff" stroke="#111"/>`;
  });
  keys.forEach(k => {
    svg += `<g transform="translate(${k[0]} ${k[1]}) rotate(${k[2]})"><use href="#linkkey" x="-6" y="-6" width="21" height="12"/></g>`;
  });
  links.innerHTML = svg;

  tables.forEach(t => {
    const box = document.createElement("div");
    box.className = "er-table";
    box.style.left = (t.x - 9) + "px";
    box.style.top = (t.y - 159) + "px";
    box.style.height = t.h + "px";
    let rows = "";
    t.rows.forEach(r => {
      const key = r[1] ? `<span class="key-cell"><svg width="9" height="14"><use href="#rowkey"/></svg></span>` : "";
      rows += `<div class="er-row"><span class="er-sel">${key}</span><span>${r[0]}</span></div>`;
    });
    box.innerHTML = `<div class="er-title">${t.name}</div><div class="er-body">${rows}</div>`;
    diagram.appendChild(box);
  });
</script>
</body>
</html>
